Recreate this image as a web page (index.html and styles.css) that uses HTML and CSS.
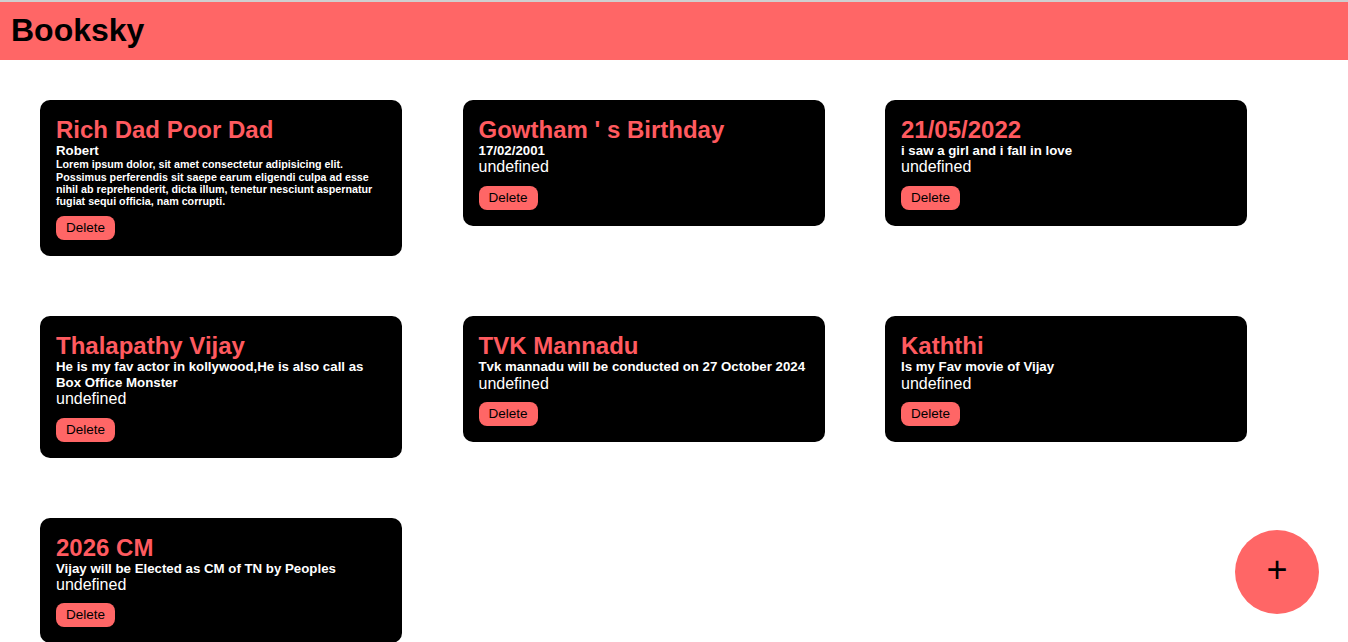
FILE: index.html
```html
<!DOCTYPE html>
<html lang="en">
<head>
<meta charset="utf-8">
<title>Booksky</title>
<link rel="stylesheet" href="styles.css">
</head>
<body>
  <header class="topbar">
    <h1 class="brand">Booksky</h1>
  </header>
  <main class="notes">
    <div class="note">
      <h2 class="note-title">Rich Dad Poor Dad</h2>
      <h5 class="note-sub">Robert</h5>
      <h6 class="note-small">Lorem ipsum dolor, sit amet consectetur adipisicing elit. Possimus perferendis sit saepe earum eligendi culpa ad esse nihil ab reprehenderit, dicta illum, tenetur nesciunt aspernatur fugiat sequi officia, nam corrupti.</h6>
      <button class="delete-btn">Delete</button>
    </div>
    <div class="note">
      <h2 class="note-title">Gowtham ' s Birthday</h2>
      <h5 class="note-sub">17/02/2001</h5>
      <p class="note-body">undefined</p>
      <button class="delete-btn">Delete</button>
    </div>
    <div class="note">
      <h2 class="note-title">21/05/2022</h2>
      <h5 class="note-sub">i saw a girl and i fall in love</h5>
      <p class="note-body">undefined</p>
      <button class="delete-btn">Delete</button>
    </div>
    <div class="note">
      <h2 class="note-title">Thalapathy Vijay</h2>
      <h5 class="note-sub">He is my fav actor in kollywood,He is also call as Box Office Monster</h5>
      <p class="note-body">undefined</p>
      <button class="delete-btn">Delete</button>
    </div>
    <div class="note">
      <h2 class="note-title">TVK Mannadu</h2>
      <h5 class="note-sub">Tvk mannadu will be conducted on 27 October 2024</h5>
      <p class="note-body">undefined</p>
      <button class="delete-btn">Delete</button>
    </div>
    <div class="note">
      <h2 class="note-title">Kaththi</h2>
      <h5 class="note-sub">Is my Fav movie of Vijay</h5>
      <p class="note-body">undefined</p>
      <button class="delete-btn">Delete</button>
    </div>
    <div class="note">
      <h2 class="note-title">2026 CM</h2>
      <h5 class="note-sub">Vijay will be Elected as CM of TN by Peoples</h5>
      <p class="note-body">undefined</p>
      <button class="delete-btn">Delete</button>
    </div>
  </main>
  <button class="fab" aria-label="Add note">+</button>
</body>
</html>
```
FILE: styles.css
```css
html, body {
  margin: 0;
  padding: 0;
}

body {
  font-family: "Liberation Sans", Arial, sans-serif;
  background: #ffffff;
  color: #000000;
  overflow: hidden;
}

.topbar {
  background: #ff6666;
  border-top: 2px solid #cfcfcf;
  padding: 10px 11px 11px;
}

.brand {
  margin: 0;
  font-size: 32px;
  font-weight: bold;
  color: #000000;
}

.notes {
  display: grid;
  grid-template-columns: repeat(3, 362px);
  column-gap: 60.5px;
  row-gap: 60px;
  align-items: start;
  padding: 40px 40px 40px 40px;
}

.note {
  background: #000000;
  border-radius: 10px;
  padding: 16px;
  color: #ffffff;
}

.note-title {
  margin: 0;
  font-size: 24px;
  line-height: 27px;
  font-weight: bold;
  color: #ff5a5f;
}

.note-sub {
  margin: 0;
  font-size: 13.28px;
  line-height: 15.3px;
  font-weight: bold;
  color: #ffffff;
}

.note-small {
  margin: 0;
  font-size: 10.72px;
  line-height: 12.3px;
  font-weight: bold;
  color: #ffffff;
}

.note-body {
  margin: 0;
  font-size: 16px;
  line-height: 18.5px;
  color: #ffffff;
}

.delete-btn {
  display: block;
  margin-top: 9px;
  font-family: "Liberation Sans", Arial, sans-serif;
  font-size: 13.5px;
  line-height: 16px;
  color: #000000;
  background: #ff6666;
  border: none;
  border-radius: 8px;
  padding: 4px 10px;
}

.fab {
  position: fixed;
  right: 29px;
  bottom: 28px;
  width: 84px;
  height: 84px;
  border-radius: 50%;
  border: none;
  background: #ff6666;
  color: #000000;
  font-family: "Liberation Sans", Arial, sans-serif;
  font-size: 36px;
  line-height: 1;
  padding: 0 0 4px 0;
}
```
